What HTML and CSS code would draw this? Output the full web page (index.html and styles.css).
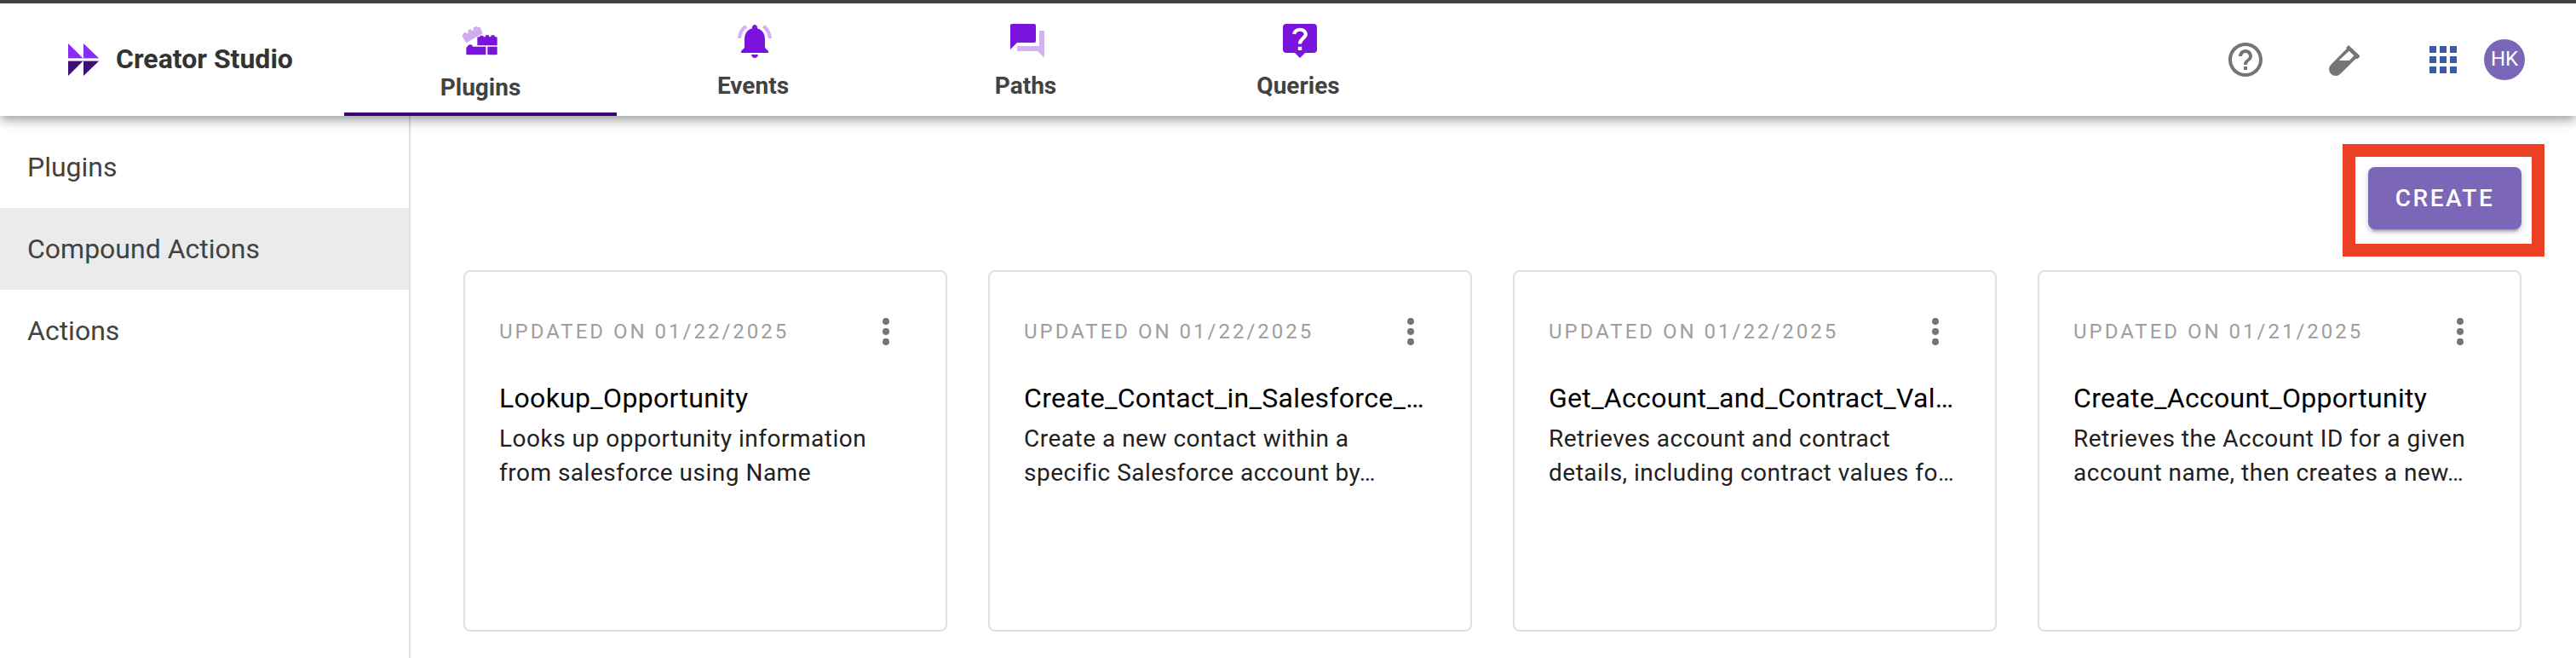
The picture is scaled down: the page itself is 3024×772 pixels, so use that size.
FILE: index.html
```html
<!DOCTYPE html>
<html lang="en">
<head>
<meta charset="utf-8">
<title>Creator Studio</title>
<link rel="stylesheet" href="styles.css">
</head>
<body>
<header class="header">
  <div class="brand">
    <svg class="logo" viewBox="0 0 108 114"><path fill="#892cf5" d="M0 0l52 52H0zM54 0l54 52H54z"/><path fill="#3f0f78" d="M0 62h52L0 114zM54 62h54l-54 52z"/><path fill="#c9a4f3" d="M0 52h108v2H0z"/><path fill="#a48fbd" d="M0 60h108v2H0z"/></svg>
    <span class="brand-name">Creator Studio</span>
  </div>
  <nav class="tabs">
    <a class="tab tab-active">
      <svg class="tab-icon" viewBox="180 72 144 144"><path fill="#d0adf1" d="M202 151L188 129L191 117L199 113L204 118L209 116L208 107L217 102L223 109L227 106V97L237 93L246 96L251 96L260 118z"/><path fill="#7a14dc" d="M244 130h6l1-5h10l2 5h6l2-6h10l3 6h5l1-6h10l4 6h3q4 0 4 4v26h-70v-26q0-4 3-4zM206 164l3-5q8-4 14 0l2 5h46v29h-66q-3 0-3-3v-22q0-3 4-4zM277 164h34v26q0 3-3 3h-31z"/></svg>
      <span class="tab-label">Plugins</span>
    </a>
    <a class="tab">
      <svg class="tab-icon" viewBox="0 0 24 24"><path fill="#d4b1f5" d="M7.58 4.08L6.15 2.65C3.75 4.48 2.17 7.3 2.03 10.5h2c.15-2.65 1.51-4.97 3.55-6.42zM19.97 10.5h2c-.15-3.2-1.73-6.02-4.12-7.85l-1.42 1.43c2.02 1.45 3.39 3.77 3.54 6.42z"/><path fill="#7a14dc" d="M18 11c0-3.07-1.64-5.64-4.5-6.32V4c0-.83-.67-1.5-1.5-1.5s-1.5.67-1.5 1.5v.68C7.63 5.36 6 7.92 6 11v5l-2 2v1h16v-1l-2-2zM10 20h4c0 1.100-.9 2-2 2s-2-.9-2-2z"/></svg>
      <span class="tab-label">Events</span>
    </a>
    <a class="tab">
      <svg class="tab-icon" viewBox="0 0 24 24"><path fill="#d4b1f5" d="M19 6h3v16l-4-4H6v-3h13z"/><path fill="#7a14dc" d="M17 12V3c0-.55-.45-1-1-1H3c-.55 0-1 .45-1 1v14l4-4h10c.55 0 1-.45 1-1z"/></svg>
      <span class="tab-label">Paths</span>
    </a>
    <a class="tab">
      <svg class="tab-icon" viewBox="0 0 24 24"><path fill="#7a14dc" d="M4 2h16a2 2 0 0 1 2 2v13a2 2 0 0 1-2 2h-5l-3 3-3-3H4a2 2 0 0 1-2-2V4a2 2 0 0 1 2-2z"/><path fill="none" stroke="#fff" stroke-width="2.100" d="M8.650 8A3.400 3 0 0 1 15.400 8C15.400 10.400 12 10.600 12 13.700"/><path fill="#fff" d="M10.900 15.400h2.200v2.100h-2.200z"/></svg>
      <span class="tab-label">Queries</span>
    </a>
  </nav>
  <div class="tools">
    <svg class="tool" viewBox="0 0 24 24"><path fill="#757575" d="M11 18h2v-2h-2v2zm1-16C6.480 2 2 6.480 2 12s4.480 10 10 10 10-4.480 10-10S17.520 2 12 2zm0 18c-4.410 0-8-3.590-8-8s3.590-8 8-8 8 3.590 8 8-3.590 8-8 8zm0-14c-2.210 0-4 1.790-4 4h2c0-1.100.9-2 2-2s2 .9 2 2c0 2-3 1.750-3 5h2c0-2.250 3-2.500 3-5 0-2.210-1.790-4-4-4z"/></svg>
    <svg class="tool" viewBox="504 138 144 144"><path fill="#757575" fill-rule="evenodd" d="M591 159L630 196L629 202L622 207L616 207L562 260A23 23 0 0 1 529 227L584 172L583 167zM593 179L557 213H594L610 196z"/></svg>
    <svg class="tool" viewBox="0 0 24 24"><path fill="#3b5ba5" d="M4 4h4v4H4zM10 4h4v4h-4zM16 4h4v4h-4zM4 10h4v4H4zM10 10h4v4h-4zM16 10h4v4h-4zM4 16h4v4H4zM10 16h4v4h-4zM16 16h4v4h-4z"/></svg>
    <span class="avatar">HK</span>
  </div>
</header>
<div class="page">
  <aside class="sidebar">
    <a class="side-item">Plugins</a>
    <a class="side-item side-active">Compound Actions</a>
    <a class="side-item">Actions</a>
  </aside>
  <main class="main">
    <div class="toolbar"><div class="highlight"><button class="create">CREATE</button></div></div>
    <section class="cards">
      <article class="card">
        <div class="card-top"><span class="updated">UPDATED ON 01/22/2025</span><svg class="dots" viewBox="0 0 24 24"><path d="M12 4a2 2 0 1 0 0 4 2 2 0 0 0 0-4zm0 6a2 2 0 1 0 0 4 2 2 0 0 0 0-4zm0 6a2 2 0 1 0 0 4 2 2 0 0 0 0-4z"/></svg></div>
        <h2 class="title">Lookup_Opportunity</h2>
        <p class="desc">Looks up opportunity information<br>from salesforce using Name</p>
      </article>
      <article class="card">
        <div class="card-top"><span class="updated">UPDATED ON 01/22/2025</span><svg class="dots" viewBox="0 0 24 24"><path d="M12 4a2 2 0 1 0 0 4 2 2 0 0 0 0-4zm0 6a2 2 0 1 0 0 4 2 2 0 0 0 0-4zm0 6a2 2 0 1 0 0 4 2 2 0 0 0 0-4z"/></svg></div>
        <h2 class="title">Create_Contact_in_Salesforce_…</h2>
        <p class="desc">Create a new contact within a<br>specific Salesforce account by…</p>
      </article>
      <article class="card">
        <div class="card-top"><span class="updated">UPDATED ON 01/22/2025</span><svg class="dots" viewBox="0 0 24 24"><path d="M12 4a2 2 0 1 0 0 4 2 2 0 0 0 0-4zm0 6a2 2 0 1 0 0 4 2 2 0 0 0 0-4zm0 6a2 2 0 1 0 0 4 2 2 0 0 0 0-4z"/></svg></div>
        <h2 class="title">Get_Account_and_Contract_Val…</h2>
        <p class="desc">Retrieves account and contract<br>details, including contract values fo…</p>
      </article>
      <article class="card">
        <div class="card-top"><span class="updated">UPDATED ON 01/21/2025</span><svg class="dots" viewBox="0 0 24 24"><path d="M12 4a2 2 0 1 0 0 4 2 2 0 0 0 0-4zm0 6a2 2 0 1 0 0 4 2 2 0 0 0 0-4zm0 6a2 2 0 1 0 0 4 2 2 0 0 0 0-4z"/></svg></div>
        <h2 class="title">Create_Account_Opportunity</h2>
        <p class="desc">Retrieves the Account ID for a given<br>account name, then creates a new…</p>
      </article>
    </section>
  </main>
</div>
</body>
</html>
```
FILE: styles.css
```css
* { box-sizing: border-box; }
body {
  margin: 0;
  height: 772px;
  display: flex;
  flex-direction: column;
  overflow: hidden;
  background: #fff;
  color: #212121;
  font-family: Roboto, "Liberation Sans", sans-serif;
}
svg { display: block; flex: none; }

.header {
  position: relative;
  z-index: 1;
  display: flex;
  flex: none;
  height: 136px;
  border-top: 4px solid #424242;
  background: #fff;
  box-shadow: 0 4px 8px -2px rgba(0,0,0,.2), 0 8px 10px 0 rgba(0,0,0,.14), 0 2px 20px 0 rgba(0,0,0,.12);
}
.brand { display: flex; align-items: center; gap: 20px; width: 404px; padding-left: 80px; }
.logo { width: 36px; height: 38px; }
.brand-name { padding-bottom: 2px; font-size: 32px; font-weight: 700; color: #333; white-space: nowrap; }

.tabs { display: flex; }
.tab {
  display: flex;
  flex-direction: column;
  align-items: center;
  gap: 9px;
  width: 320px;
  padding-top: 20px;
  color: #424242;
}
.tab-icon { width: 48px; height: 48px; margin-left: 4px; }
.tab-label { font-size: 28px; font-weight: 700; line-height: 40px; }
.tab-active { gap: 11px; border-bottom: 4px solid #3c0078; }
.tab-active .tab-icon { margin-left: 0; }

.tools { display: flex; align-items: center; margin-left: auto; padding-right: 60px; }
.tool { width: 48px; height: 48px; margin-right: 68px; }
.tool:nth-of-type(3) { margin-right: 24px; }
.avatar {
  width: 48px;
  height: 48px;
  border-radius: 50%;
  background: #7c66b8;
  color: #fff;
  font-size: 24px;
  line-height: 46px;
  text-align: center;
}

.page { display: flex; flex: 1; min-height: 0; }
.sidebar { width: 482px; padding-top: 12px; border-right: 2px solid #e0e0e0; }
.side-item { display: block; padding-left: 32px; font-size: 32px; line-height: 96px; color: #424242; }
.side-active { background: #ebebeb; }

.main { flex: 1; padding: 33px 37px 0 62px; }
.toolbar { display: flex; justify-content: flex-end; height: 132px; }
.highlight { width: 237px; height: 132px; padding: 12px 12px 0 15px; border: 15px solid #eb4026; }
.create {
  display: block;
  width: 180px;
  height: 73px;
  padding: 0;
  border: 0;
  border-radius: 8px;
  background: #7c66b8;
  color: #fff;
  font: 500 28px/72px Roboto, sans-serif;
  letter-spacing: 2.5px;
  box-shadow: 0 6px 2px -4px rgba(0,0,0,.2), 0 4px 4px 0 rgba(0,0,0,.14), 0 2px 10px 0 rgba(0,0,0,.12);
}

.cards { display: grid; grid-template-columns: repeat(4, 568px); gap: 48px; margin-top: 16px; }
.card { height: 424px; padding: 46px 40px 0; border: 2px solid #e0e0e0; border-radius: 8px; }
.card-top { display: flex; align-items: center; justify-content: space-between; height: 48px; padding-right: 6px; }
.updated { font-size: 24px; letter-spacing: 3px; color: #9e9e9e; white-space: nowrap; }
.dots { width: 48px; height: 48px; fill: #757575; }
.title { margin: 34px 0 8px; font-size: 32px; font-weight: 400; line-height: 40px; letter-spacing: .3px; color: #000; white-space: nowrap; }
.desc { margin: 0; font-size: 28px; line-height: 40px; letter-spacing: .5px; white-space: nowrap; }
```
